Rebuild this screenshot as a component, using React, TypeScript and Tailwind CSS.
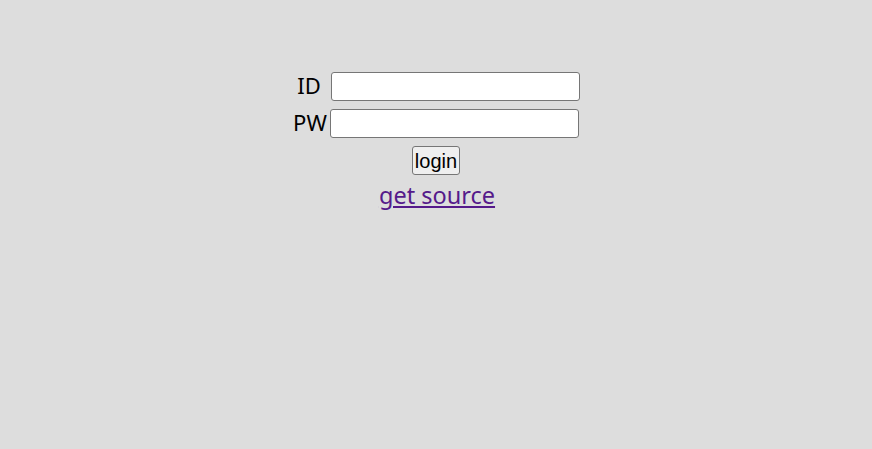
import React from 'react';

const App: React.FC = () => {
  return (
    <div
      className="min-h-[449px] w-full bg-[#dddddd] text-black"
      style={{ fontFamily: '"Noto Sans", "Noto Sans CJK KR", sans-serif' }}
    >
      <div className="flex flex-col items-center pt-[72px] text-[22px] leading-none">
        <div className="flex items-center h-[29px] pl-[5px]">
          <span className="mr-[10px] -mt-[3px]">ID</span>
          <input
            type="text"
            className="w-[249px] h-[29px] bg-white border border-[#767676] rounded-[3px]"
          />
        </div>
        <div className="flex items-center h-[29px] mt-[8px]">
          <span className="mr-[3px] -mt-[3px]">PW</span>
          <input
            type="password"
            className="w-[249px] h-[29px] bg-white border border-[#767676] rounded-[3px]"
          />
        </div>
        <button
          className="mt-[8px] h-[29px] px-[2px] bg-[#efefef] border border-[#767676] rounded-[3px] text-[20px] leading-none"
          style={{ fontFamily: '"Liberation Sans", Arial, sans-serif' }}
        >
          login
        </button>
        <a
          href="#"
          className="mt-[4px] text-[#551a8b] underline text-[23.5px] leading-[32px] ml-[2px]"
        >
          get source
        </a>
      </div>
    </div>
  );
};

export default App;
